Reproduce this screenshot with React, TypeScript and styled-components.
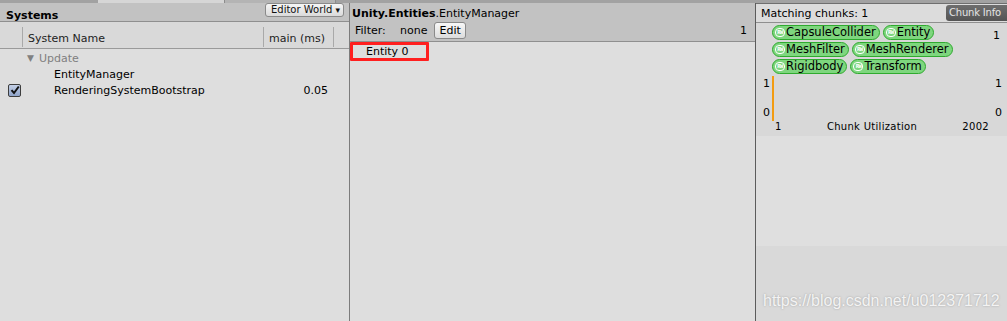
import React from 'react';
import styled, { createGlobalStyle } from 'styled-components';

const GlobalStyle = createGlobalStyle`
  html, body {
    margin: 0;
    padding: 0;
    background: #dedede;
    overflow: hidden;
  }
  body {
    font-family: "DejaVu Sans", Verdana, sans-serif;
    font-size: 11px;
    color: #000;
  }
`;

const Page = styled.div`
  width: 1007px;
  height: 321px;
  display: flex;
  flex-direction: column;
  background: #dedede;
`;

const TabStrip = styled.div`
  height: 3px;
  background: #a2a2a2;
  display: flex;
  padding-left: 98px;
`;

const Tab = styled.div<{ $w: number; $light?: boolean }>`
  width: ${p => p.$w}px;
  background: ${p => (p.$light ? '#d6d6d6' : '#b4b4b4')};
  border-right: 1px solid #8c8c8c;
`;

const Columns = styled.div`
  flex: 1;
  display: flex;
  min-height: 0;
`;

/* ---------- left: systems ---------- */

const SystemsPanel = styled.div`
  width: 349px;
  border-right: 1px solid #7c7c7c;
  display: flex;
  flex-direction: column;
  background: #dedede;
`;

const SystemsHeader = styled.div`
  height: 18px;
  background: #c2c2c2;
  border-bottom: 1px solid #8f8f8f;
  display: flex;
  align-items: flex-start;
  justify-content: space-between;
  padding: 0 5px 0 6px;
`;

const PanelTitle = styled.span`
  font-weight: bold;
  font-size: 11px;
  line-height: 14px;
  margin-top: 6px;
`;

const DropButton = styled.button`
  height: 14px;
  width: 79px;
  padding: 0 3px 0 5px;
  border: 1px solid #8a8a8a;
  border-radius: 3px;
  background: linear-gradient(#f6f6f6, #dadada);
  font-family: "DejaVu Sans", Verdana, sans-serif;
  font-size: 10px;
  line-height: 12px;
  display: flex;
  align-items: center;
  justify-content: space-between;
  color: #111;
`;

const Caret = styled.span`
  font-size: 9px;
`;

const ColumnHeader = styled.div`
  height: 26px;
  display: grid;
  grid-template-columns: 22px 241px 70px 1fr;
  border-bottom: 1px solid #9a9a9a;
  background: #d9d9d9;
`;

const HeadCell = styled.div<{ $sep?: boolean }>`
  display: flex;
  align-items: flex-end;
  padding: 0 0 1px 5px;
  line-height: 14px;
  color: #222;
  border-left: ${p => (p.$sep ? '1px solid #a9a9a9' : 'none')};
  margin: 5px 0 1px;
`;

const Rows = styled.div`
  padding-top: 1px;
  display: flex;
  flex-direction: column;
`;

const Row = styled.div`
  height: 16px;
  display: grid;
  grid-template-columns: 27px 1fr 60px;
  align-items: center;
  padding-right: 21px;
`;

const GroupLabel = styled.span`
  color: #808080;
  display: flex;
  align-items: center;
  gap: 5px;
`;

const Arrow = styled.span`
  font-size: 9px;
`;

const Indent = styled.span<{ $px: number }>`
  padding-left: ${p => p.$px}px;
`;

const Time = styled.span`
  text-align: right;
`;

const Check = styled.span`
  width: 11px;
  height: 11px;
  margin-left: 8px;
  border: 1px solid #3d3d3d;
  border-radius: 2px;
  background: linear-gradient(#c4d0e6, #8ea3c9);
  display: flex;
  align-items: center;
  justify-content: center;
`;

/* ---------- middle: entities ---------- */

const EntityPanel = styled.div`
  width: 405px;
  display: flex;
  flex-direction: column;
`;

const EntityHeader = styled.div`
  height: 35px;
  background: #c2c2c2;
  border-bottom: 1px solid #8f8f8f;
  display: flex;
  flex-direction: column;
  padding: 3px 8px 0 2px;
`;

const TypeLine = styled.div`
  line-height: 15px;
  font-size: 11px;
`;

const Bold = styled.b``;

const FilterLine = styled.div`
  display: flex;
  align-items: center;
  height: 19px;
  padding-left: 3px;
`;

const FilterLabel = styled.span`
  width: 45px;
`;

const Spacer = styled.span`
  flex: 1;
`;

const EditButton = styled.button`
  height: 17px;
  margin-left: 7px;
  padding: 0 4px;
  border: 1px solid #8a8a8a;
  border-radius: 3px;
  background: linear-gradient(#f8f8f8, #dcdcdc);
  font-family: "DejaVu Sans", Verdana, sans-serif;
  font-size: 11px;
  color: #000;
`;

const EntityItem = styled.div`
  width: 60px;
  height: 13px;
  border: 3px solid #ff1f1f;
  border-radius: 1px;
  padding-left: 13px;
  line-height: 13px;
`;

/* ---------- right: chunk info ---------- */

const ChunkPanel = styled.div`
  flex: 1;
  border-left: 1px solid #5c5c5c;
  display: flex;
  flex-direction: column;
`;

const ChunkHeader = styled.div`
  height: 18px;
  border-top: 1px solid #6f6f6f;
  border-bottom: 1px solid #8f8f8f;
  background: #dcdcdc;
  display: flex;
  align-items: center;
  justify-content: space-between;
  padding-left: 5px;
  overflow: hidden;
`;

const DarkTab = styled.div`
  height: 16px;
  width: 58px;
  padding-left: 3px;
  border-radius: 3px 0 0 3px;
  background: linear-gradient(#6e6e6e, #545454);
  color: #e4e4e4;
  font-size: 10px;
  line-height: 16px;
  letter-spacing: -0.2px;
  white-space: nowrap;
`;

const ChunkBody = styled.div`
  height: 113px;
  background: #d8d8d8;
  display: flex;
  flex-direction: column;
`;

const ChipArea = styled.div`
  display: flex;
  padding: 2px 7px 0 16px;
`;

const ChipRows = styled.div`
  flex: 1;
  display: flex;
  flex-direction: column;
  gap: 2px;
`;

const ChipRow = styled.div`
  display: flex;
  gap: 3px;
`;

const Chip = styled.span`
  height: 13px;
  border: 1px solid #2faa2f;
  border-radius: 8px;
  background: #7ed67e;
  display: inline-flex;
  align-items: center;
  gap: 1px;
  padding: 0 3px 0 2px;
  font-size: 11.5px;
  line-height: 13px;
`;

const Rw = styled.span`
  width: 10px;
  height: 9px;
  border: 1px solid #fff;
  border-radius: 4px;
  font-family: "DejaVu Sans Mono", monospace;
  font-size: 5.5px;
  font-weight: bold;
  color: #fff;
  display: inline-flex;
  align-items: center;
  justify-content: center;
  letter-spacing: -0.6px;
  box-sizing: border-box;
`;

const CountLabel = styled.span`
  padding-top: 4px;
  line-height: 14px;
`;

const Graph = styled.div`
  display: grid;
  grid-template-columns: 8px 1fr 12px;
  height: 45px;
  margin-top: 2px;
  padding-left: 7px;
`;

const AxisLabels = styled.div`
  display: flex;
  flex-direction: column;
  justify-content: space-between;
  padding: 1px 0;
  font-size: 11px;
  line-height: 14px;
`;

const Plot = styled.div`
  border-left: 2px solid #f39c12;
  margin-left: 1px;
`;

const AxisFoot = styled.div`
  display: flex;
  justify-content: space-between;
  padding: 0 18px 0 19px;
  font-size: 10px;
  line-height: 12px;
  letter-spacing: 0.3px;
`;

const ChunkFill = styled.div`
  height: 110px;
  background: #dfdfdf;
`;

const ChunkBottom = styled.div`
  flex: 1;
  background: #d9d9d9;
  display: flex;
  align-items: flex-end;
  padding: 0 0 11px 7px;
`;

const Watermark = styled.span`
  font-family: "Liberation Sans", Arial, sans-serif;
  font-size: 16px;
  color: rgba(255, 255, 255, 0.85);
  text-shadow: 0 0 2px rgba(120, 120, 120, 0.6);
`;

const components = [
  ['CapsuleCollider', 'Entity'],
  ['MeshFilter', 'MeshRenderer'],
  ['Rigidbody', 'Transform'],
];

const CheckMark = () => (
  <svg width="10" height="10" viewBox="0 0 10 10">
    <path d="M1.5 5.2 L4 8 L8.8 1.5" fill="none" stroke="#111" strokeWidth="2" />
  </svg>
);

export default function App() {
  return (
    <Page>
      <GlobalStyle />
      <TabStrip>
        <Tab $w={126} $light />
        <Tab $w={110} />
      </TabStrip>
      <Columns>
        <SystemsPanel>
          <SystemsHeader>
            <PanelTitle>Systems</PanelTitle>
            <DropButton>
              Editor World<Caret>▾</Caret>
            </DropButton>
          </SystemsHeader>
          <ColumnHeader>
            <div />
            <HeadCell $sep>System Name</HeadCell>
            <HeadCell $sep>main (ms)</HeadCell>
            <HeadCell $sep />
          </ColumnHeader>
          <Rows>
            <Row>
              <span />
              <GroupLabel>
                <Arrow>▼</Arrow>Update
              </GroupLabel>
              <span />
            </Row>
            <Row>
              <span />
              <Indent $px={27}>EntityManager</Indent>
              <span />
            </Row>
            <Row>
              <Check>
                <CheckMark />
              </Check>
              <Indent $px={27}>RenderingSystemBootstrap</Indent>
              <Time>0.05</Time>
            </Row>
          </Rows>
        </SystemsPanel>

        <EntityPanel>
          <EntityHeader>
            <TypeLine>
              <Bold>Unity.Entities</Bold>.EntityManager
            </TypeLine>
            <FilterLine>
              <FilterLabel>Filter:</FilterLabel>
              <span>none</span>
              <EditButton>Edit</EditButton>
              <Spacer />
              <span>1</span>
            </FilterLine>
          </EntityHeader>
          <EntityItem>Entity 0</EntityItem>
        </EntityPanel>

        <ChunkPanel>
          <ChunkHeader>
            <span>Matching chunks: 1</span>
            <DarkTab>Chunk Info</DarkTab>
          </ChunkHeader>
          <ChunkBody>
            <ChipArea>
              <ChipRows>
                {components.map((row, i) => (
                  <ChipRow key={i}>
                    {row.map(name => (
                      <Chip key={name}>
                        <Rw>RW</Rw>
                        {name}
                      </Chip>
                    ))}
                  </ChipRow>
                ))}
              </ChipRows>
              <CountLabel>1</CountLabel>
            </ChipArea>
            <Graph>
              <AxisLabels>
                <span>1</span>
                <span>0</span>
              </AxisLabels>
              <Plot />
              <AxisLabels>
                <span>1</span>
                <span>0</span>
              </AxisLabels>
            </Graph>
            <AxisFoot>
              <span>1</span>
              <span>Chunk Utilization</span>
              <span>2002</span>
            </AxisFoot>
          </ChunkBody>
          <ChunkFill />
          <ChunkBottom>
            <Watermark>https://blog.csdn.net/u012371712</Watermark>
          </ChunkBottom>
        </ChunkPanel>
      </Columns>
    </Page>
  );
}
